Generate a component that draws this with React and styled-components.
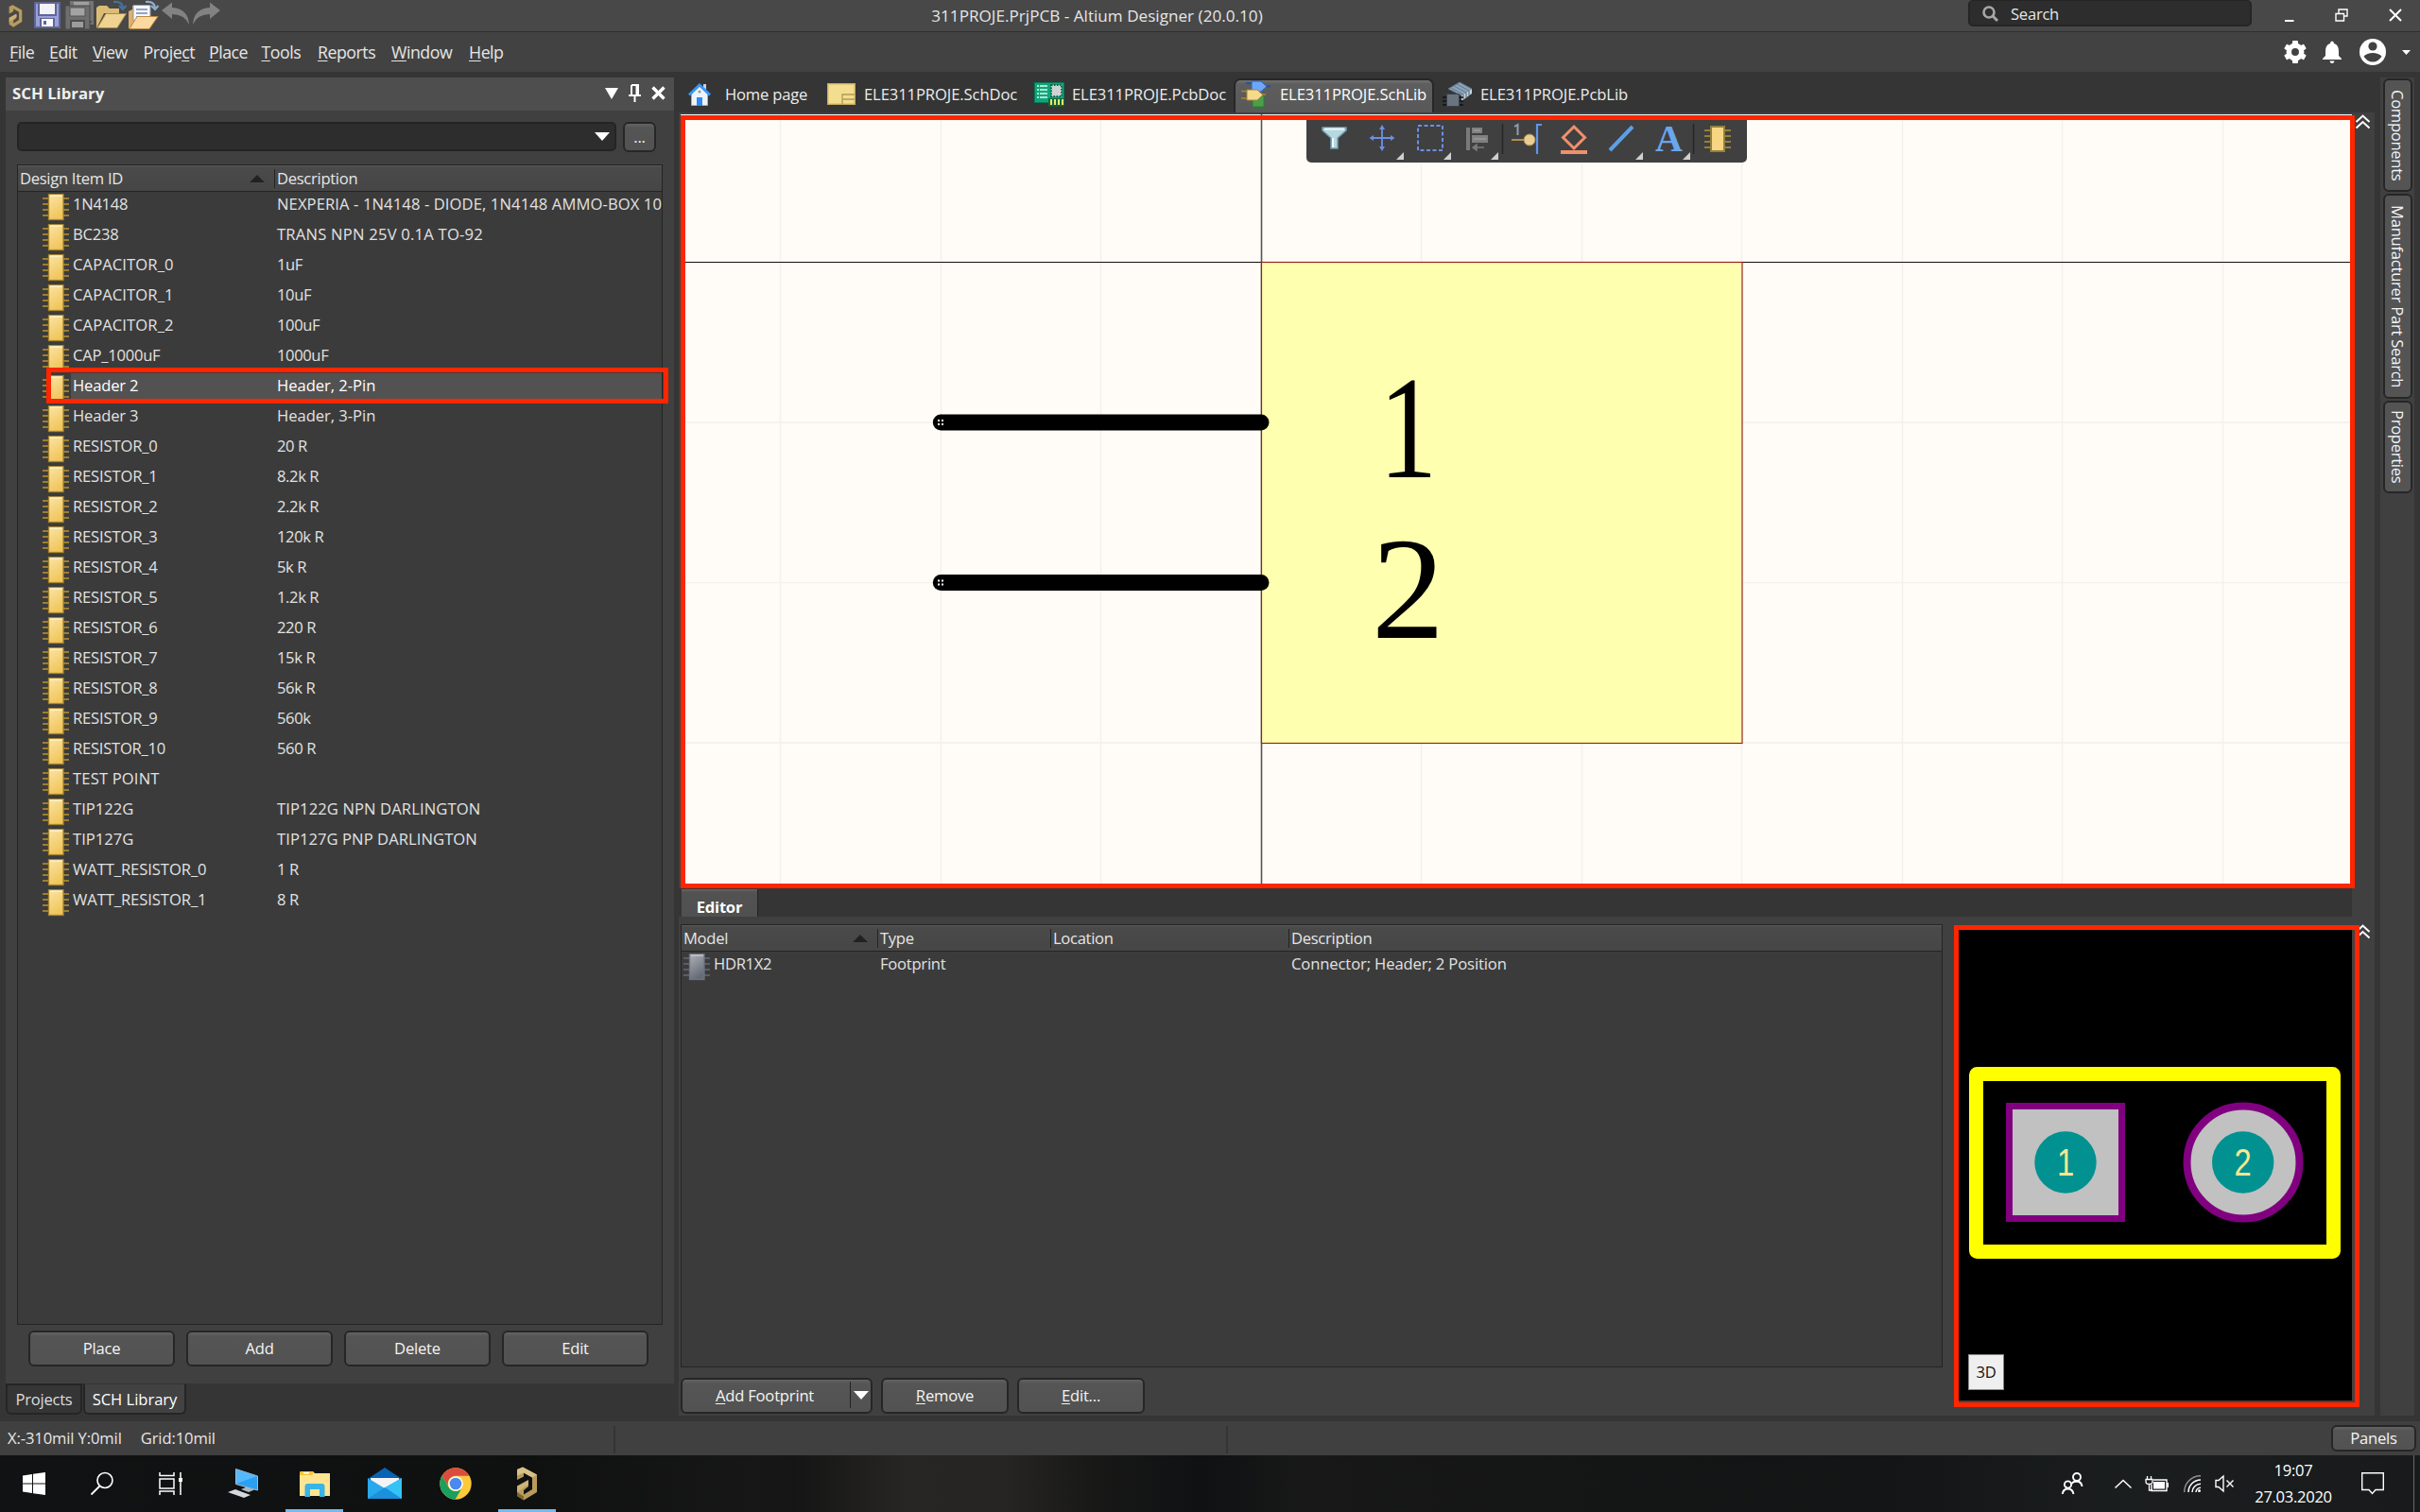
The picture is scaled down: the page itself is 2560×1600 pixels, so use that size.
import React from "react";
import styled, { createGlobalStyle, css } from "styled-components";

const Global = createGlobalStyle`
  * { box-sizing: border-box; }
  html, body { margin: 0; padding: 0; background: #353535; }
  body {
    width: 2560px; height: 1600px; overflow: hidden;
    font-family: "Open Sans", "Noto Sans", sans-serif;
    font-size: 16.6px; letter-spacing: -0.36px; color: #e6e6e6;
  }
  svg { display: block; flex: none; overflow: visible; }
  u { text-underline-offset: 2px; text-decoration-thickness: 1px; }
`;

const Screen = styled.div`
  width: 2560px; height: 1600px; display: flex; flex-direction: column; background: #353535;
`;

/* ---------- title and menu ---------- */
const TitleBar = styled.header`
  position: relative; height: 34px; display: flex; align-items: flex-start;
  background: #484848; border-bottom: 1px solid #2f2f2f; flex: none;
`;
const QuickTools = styled.div`display: flex; padding-left: 8px;`;
const Title = styled.div`
  position: absolute; left: 0; right: 239px; top: 4px; text-align: center; line-height: 26px; pointer-events: none;
  font-size: 17.1px; letter-spacing: 0.02px;
`;
const SearchBox = styled.div`
  margin-left: auto; width: 300px; height: 28px; display: flex; align-items: center; gap: 13px;
  padding: 1px 0 0 13px; background: #2d2d2d; border: 2px solid #252525; border-top-width: 1px; border-radius: 5px;
  letter-spacing: -0.25px;
`;
const WindowButtons = styled.div`
  width: 178px; height: 33px; display: flex; align-items: center; padding: 0 19px 2px 35px; justify-content: space-between;
`;
const MenuBar = styled.nav`
  height: 42px; flex: none; display: flex; align-items: center; background: #424242; padding-left: 10px;
`;
const MenuItem = styled.span`
  width: ${p => p.$w}px; font-size: 17.8px; letter-spacing: -0.5px; line-height: 40px; white-space: nowrap;
`;
const MenuRight = styled.div`
  margin-left: auto; display: flex; align-items: center; padding-right: 10px;
`;
const Spacer = styled.span`width: ${p => p.$w}px; flex: none;`;

/* ---------- workspace ---------- */
const Workspace = styled.main`height: 1428px; display: flex; flex: none;`;
const LeftColumn = styled.aside`width: 718px; padding: 6px 5px 0 6px; display: flex; flex-direction: column;`;
const Panel = styled.section`
  position: relative; height: 1382px; background: #404040; display: flex; flex-direction: column;
`;
const PanelHeader = styled.div`
  height: 35px; flex: none; background: #4e4e4e; display: flex; align-items: center; padding: 0 9px 2px 7px;
  font-weight: 700; font-size: 16.8px; letter-spacing: 0; color: #efefef;
`;
const PanelHeaderIcons = styled.div`margin-left: auto; display: flex; align-items: center; gap: 11px;`;
const FilterRow = styled.div`display: flex; gap: 7px; padding: 12px 19px 0 12px; height: 57px; flex: none;`;
const Combo = styled.div`
  flex: 1; height: 31px; background: #2d2d2d; border: 2px solid #242424; border-radius: 5px;
  display: flex; align-items: center; justify-content: flex-end; padding-right: 5px;
`;

const raised = css`
  background: linear-gradient(#646464, #555 4px, #525252); border: 2px solid #262626; border-radius: 6px; color: #f4f4f4;
`;
const Button = styled.button`
  ${raised}
  width: ${p => p.$w}px; height: ${p => p.$h || 38}px; padding: 0 0 2px; display: flex; align-items: center; justify-content: center;
  font: inherit; letter-spacing: -0.2px; flex: none;
`;
const SplitLabel = styled.span`flex: 1; text-align: center; padding-right: 3px;`;
const SplitArrow = styled.span`
  width: 22px; height: 28px; border-left: 1px solid #222; display: flex; align-items: center; justify-content: center;
`;

const Grid = styled.div`
  border: 1px solid #242424; background: #3b3b3b; display: flex; flex-direction: column;
  width: ${p => p.$w}px; height: ${p => p.$h}px; flex: none;
`;
const LibraryGrid = styled(Grid)`margin-left: 12px;`;
const GridHead = styled.div`
  height: 28px; flex: none; display: flex; align-items: center; background: linear-gradient(#5a5a5a, #4a4a4a 2px, #464646);
  border-bottom: 1px solid #242424;
`;
const HeadCell = styled.div`
  width: ${p => p.$w}px; flex: ${p => (p.$w ? "none" : 1)}; height: 20px; display: flex; align-items: center; justify-content: space-between;
  padding: 0 ${p => p.$pr || 0}px 0 2px; border-right: 1px solid ${p => (p.$w ? "#242424" : "transparent")};
  letter-spacing: -0.3px; white-space: nowrap;
`;
const Row = styled.div`
  height: ${p => p.$h || 32}px; flex: none; display: flex; align-items: flex-start; padding-left: ${p => p.$pl || 0}px;
`;
const RowIcon = styled.span`padding-top: ${p => p.$pt || 2}px; width: 30px; flex: none;`;
const RowFill = styled.div`
  flex: 1; min-width: 0; height: 28px; display: flex; background: ${p => (p.$on ? "#525252" : "transparent")};
  color: ${p => (p.$on ? "#fff" : "#e2e2e2")};
`;
const Cell = styled.span`
  width: ${p => p.$w}px; flex: ${p => (p.$w ? "none" : 1)}; padding-left: 2px; line-height: 25px; white-space: nowrap; overflow: hidden;
  letter-spacing: ${p => p.$track ?? -0.4}px;
`;
const RowMark = styled.div`
  position: absolute; left: 43px; top: 307px; width: 658px; height: 38px; border: 5px solid #ff2600;
`;
const ButtonRow = styled.div`display: flex; gap: 12px; padding: 6px 0 0 24px;`;
const PanelTabs = styled.div`display: flex; gap: 1px;`;
const PanelTab = styled.div`
  width: ${p => p.$w}px; height: 33px; display: flex; align-items: center; justify-content: center; letter-spacing: ${p => p.$track}px;
  border: 2px solid #252525; border-top: ${p => (p.$on ? "1px solid #353535" : "2px solid #252525")}; border-radius: 0 0 6px 6px;
  background: ${p => (p.$on ? "#424242" : "#353535")}; color: ${p => (p.$on ? "#fff" : "#dcdcdc")};
`;

/* ---------- documents ---------- */
const Center = styled.div`width: 1794px; display: flex; flex-direction: column; flex: none;`;
const DocTabs = styled.div`height: 43px; flex: none; display: flex; align-items: flex-end;`;
const DocTab = styled.div`
  width: ${p => p.$w}px; height: 36px; display: flex; align-items: center; padding: 0 0 3px ${p => p.$pl}px; gap: ${p => p.$gap}px;
  white-space: nowrap; letter-spacing: ${p => p.$track || -0.1}px; color: #ececec;
  ${p => p.$on && css`
    color: #fff; background: linear-gradient(#727272, #5e5e5e 4px, #585858); border: 2px solid #272727; border-bottom: 0;
    border-radius: 7px 7px 0 0; padding-bottom: 5px;
  `}
`;
const EditorArea = styled.div`
  height: 821px; flex: none; background: #404040; display: flex; padding: 2px 0 0 2px;
`;
const Sheet = styled.div`
  position: relative; width: 1768px; height: 819px; background: #fffcf7;
`;
const SheetFrame = styled.div`
  position: absolute; left: 0; top: 1px; width: 1771px; height: 818px; border: 5px solid #ff2600;
`;
const Floating = styled.div`
  position: absolute; left: 662px; top: 6px; width: 466px; height: 45px; background: #404040; border-radius: 0 0 5px 5px;
  display: flex; align-items: flex-start; padding: 4px 0 0 16px;
`;
const Tool = styled.span`width: ${p => p.$w || 50}px; height: 38px; flex: none;`;
const Gutter = styled.div`margin-left: ${p => p.$ml ?? 4}px;`;
const EditorTabs = styled.div`height: 30px; flex: none; display: flex; padding: 1px 0 0 3px; background: #353535; margin-right: 24px;`;
const EditorTab = styled.div`
  width: 81px; height: 29px; background: linear-gradient(#666, #525252 3px, #505050); border-right: 1px solid #252525;
  display: flex; align-items: center; justify-content: center; padding-top: 8px; font-weight: 700; letter-spacing: -0.25px; color: #fff;
`;
const EditorTabWrap = styled.div`background: #404040; flex: none;`;
const ModelPane = styled.div`
  height: 528px; background: #404040; display: flex; padding: 8px 0 0 2px;
`;
const ModelLeft = styled.div`width: 1347px; display: flex; flex-direction: column;`;
const ModelButtons = styled.div`display: flex; gap: 9px; padding-top: 11px;`;
const Preview = styled.div`
  position: relative; width: 429px; height: 510px; margin-top: 1px; border: 5px solid #ff2600; background: #000;
  box-shadow: inset -3px -2px 0 #454040;
`;
const ThreeD = styled.div`
  position: absolute; left: 10px; bottom: 13px; width: 38px; height: 38px; background: #efefef; border: 1px solid #888;
  color: #111; display: flex; align-items: center; justify-content: center; padding-bottom: 2px;
`;

/* ---------- right rail ---------- */
const Rail = styled.aside`
  margin: 6px 0 0 6px; width: 36px; height: 1416px; background: #404040; display: flex; flex-direction: column; gap: 2px; padding: 1px 0 0 3px;
`;
const RailTab = styled.div`
  ${raised}
  background: #545454; width: 31px; height: ${p => p.$h}px; writing-mode: vertical-rl; display: flex; align-items: center;
  justify-content: center; letter-spacing: ${p => p.$track}px;
`;

/* ---------- status and task bars ---------- */
const StatusBar = styled.footer`
  height: 36px; flex: none; background: #404040; display: flex; align-items: center; padding: 0 4px 0 8px;
`;
const StatusCell = styled.div`
  width: ${p => p.$w}px; height: 29px; line-height: 26px; border-right: 2px solid #343434; margin-top: 3px; display: flex; gap: 20px;
  letter-spacing: -0.12px;
`;
const StatusEnd = styled.div`margin-left: auto;`;
const TaskBar = styled.div`
  height: 60px; flex: none; display: flex; color: #fff;
  background: linear-gradient(90deg, #111213 0, #0f1010 560px, #161716 800px, #151515 840px, #272624 960px, #262523 1060px,
    #181817 1160px, #0f1113 1270px, #171817 1370px, #141515 1700px, #131516 2000px, #1b1e1f 2250px, #181a1b 2560px);
`;
const TaskItem = styled.div`
  width: ${p => p.$w}px; height: 60px; display: flex; align-items: center; justify-content: center; flex: none;
  border-bottom: 3px solid ${p => (p.$open ? "#76b9ed" : "transparent")}; padding-top: 3px;
`;
const Tray = styled.div`margin-left: auto; display: flex; align-items: center; height: 60px;`;
const Clock = styled.div`
  width: 96px; text-align: center; line-height: 28px; letter-spacing: -0.3px; margin: 0 24px 0 15px;
`;
const ShowDesktop = styled.div`width: 7px; height: 60px; border-left: 1px solid #6a6a6a; margin-left: 31px;`;

/* ---------- small drawings ---------- */
const Down = ({ w = 16, h = 8, c = "#fff" }) => (
  <svg width={w} height={h}><path d={`M0 0H${w}L${w / 2} ${h}Z`} fill={c} /></svg>
);
const Up = () => <svg width="16" height="8"><path d="M0 8H16L8 0Z" fill="#222" /></svg>;

const Chip = ({ grey }) => (
  <svg width="28" height="28" viewBox="0 0 28 28">
    <defs>
      <linearGradient id={grey ? "cg" : "cy"} x1="0" y1="0" x2="0.4" y2="1">
        <stop offset="0" stopColor={grey ? "#aeb0b8" : "#fbe4a4"} />
        <stop offset="1" stopColor={grey ? "#666d78" : "#f1c65c"} />
      </linearGradient>
    </defs>
    {[5, 11, 17, 23].map(y => (
      <path key={y} d={`M0 ${y}H28`} stroke={grey ? "#5d626d" : "#a8862f"} strokeWidth="1.8" />
    ))}
    <rect x="6.5" y="0.7" width="15.5" height="26.8" fill={`url(#${grey ? "cg" : "cy"})`} stroke={grey ? "#6f7480" : "#a8862f"} strokeWidth="1.3" />
    <path d="M7.6 2H21" stroke={grey ? "#c9cad0" : "#fff4d2"} strokeWidth="1.4" />
  </svg>
);

const Altium = ({ w, h }) => (
  <svg width={w} height={h} viewBox="0 0 23 36">
    <path d="M1 3L7 0.5L22 8.5V27L8 35.5L1 31V25L13 16V21L8 25V29.5L17 24V11.5L8 6.5V10.500L1 14Z" fill="#b89b5c" />
    <path d="M1 3L7 0.5L22 8.5L17 11.5L8 6.5L1 9.5Z" fill="#d8c08a" />
    <path d="M1 20.5L13 14V19L1 27Z" fill="#cdb377" />
    <path d="M1 27L8 31.5V35.5L1 31Z" fill="#7d6632" />
  </svg>
);

const TitleIcons = () => (
  <svg width="226" height="33" viewBox="8 0 226 33">
    <g transform="translate(9 5) scale(0.65 0.67)">
      <path d="M1 3L7 0.5L22 8.5V27L8 35.5L1 31V25L13 16V21L8 25V29.5L17 24V11.5L8 6.5V10.500L1 14Z" fill="#b89b5c" />
      <path d="M1 20.5L13 14V19L1 27Z" fill="#cdb377" />
    </g>
    <rect x="36" y="2" width="28" height="28" fill="#5f6596" />
    <rect x="38" y="4" width="24" height="24" fill="#9aa0d8" />
    <rect x="40" y="3" width="20" height="14" fill="#5f6596" /><rect x="42" y="4" width="16" height="11" fill="#f2f2f8" />
    <rect x="42" y="19" width="16" height="10" fill="#5f6596" /><rect x="44" y="20" width="12" height="8" fill="#fbfbff" />
    <rect x="46" y="22" width="3" height="4" fill="#5f6596" />
    <rect x="74" y="1" width="25" height="25" fill="#747474" />
    <rect x="78" y="2" width="16" height="5" fill="#a0a0a0" />
    <path d="M92 8V23H97" stroke="#505050" strokeWidth="2" fill="none" />
    <rect x="69" y="6" width="26" height="25" fill="#6e6e6e" stroke="#4b4b4b" />
    <rect x="74" y="8" width="16" height="9" fill="#a3a3a3" stroke="#555" /><rect x="75" y="22" width="14" height="8" fill="#9c9c9c" stroke="#4d4d4d" strokeWidth="2" />
    <path d="M102 30V8L105 6H113L116 9H126V14H110Z" fill="#dcbc74" />
    <path d="M103 29.500L112 14.500H133.500L124 29.500Z" fill="#f0d391" stroke="#a98a47" />
    <path d="M120 2Q129 1 130 8M126 6L130 10L133.500 6" fill="none" stroke="#4a7096" strokeWidth="2.2" />
    <path d="M136 30V12L140 10V6H144V30Z" fill="#dcb068" />
    <path d="M141 5.500H159V22H141Z" fill="#f6f8fd" stroke="#8f93b0" />
    <path d="M144 10H156M144 14H156M144 18H154" stroke="#7388bb" strokeWidth="1.500" />
    <path d="M137 30.500L145 17.500H167L158 30.500Z" fill="#fbd9a0" stroke="#b98b3f" />
    <path d="M154 2Q163 1 164 8M160 6L164 10L167.500 6" fill="none" stroke="#8fb0cf" strokeWidth="2" />
    <path d="M171 11L182 2.500V8Q199 9 200 26Q195 15 182 15V20Z" fill="#828282" />
    <path d="M233 11L222 2.500V8Q205 9 204 26Q209 15 222 15V20Z" fill="#828282" />
  </svg>
);

const Pin = () => (
  <svg width="13" height="19"><path d="M3 1H10V11M3 1V11M0 12H13M6.500 12V19" stroke="#fff" strokeWidth="2" fill="none" /><path d="M7.500 1H10V11H7.500Z" fill="#fff" /></svg>
);
const Cross = () => <svg width="15" height="15"><path d="M1.500 1.500L13.500 13.500M13.500 1.500L1.500 13.500" stroke="#fff" strokeWidth="3.400" /></svg>;
const Chevrons = () => (
  <svg width="15" height="15"><path d="M0.500 8L7.500 1.500L14.500 8M0.500 14.500L7.500 8L14.500 14.500" stroke="#fff" strokeWidth="2" fill="none" /></svg>
);
const Corner = ({ x = 28 }) => <path d={`M${x + 8} 30V38H${x}Z`} fill="#d0d0d0" />;

/* ---------- schematic symbol ---------- */
const vLines = [105.500, 275.500, 444.500, 783.500, 953.500, 1122.500, 1292.500, 1461.500, 1631.500];
const hLines = [326, 495.500, 665];
const pins = [
  { y: 326, base: 384, label: "1", cx: 769.500, sx: 0.8 },
  { y: 495.500, base: 554, label: "2", cx: 769.500, sx: 1 },
];
const Schematic = () => (
  <svg width="1768" height="819">
    {vLines.map(x => <path key={x} d={`M${x} 0V819`} stroke="#f1f1ee" strokeWidth="1.4" />)}
    {hLines.map(y => <path key={y} d={`M0 ${y}H1768`} stroke="#f1f1ee" strokeWidth="1.4" />)}
    <path d="M0 156.500H1768" stroke="#111" strokeWidth="1.1" />
    <path d="M614.500 0V819" stroke="#55554f" strokeWidth="1.6" />
    <rect x="614.500" y="156.500" width="508.500" height="509" fill="#ffffb0" stroke="#98231d" strokeWidth="1.2" />
    {pins.map(({ y, base, label, cx, sx }) => (
      <g key={label}>
        <path d={`M275.300 ${y}H614`} stroke="#000" strokeWidth="17" strokeLinecap="round" />
        {[[272, -3], [276, -3], [272, 1], [276, 1]].map(([dx, dy]) => (
          <rect key={dx + "," + dy} x={dx} y={y + dy} width="2" height="2" fill="#fff" />
        ))}
        <text transform={`translate(${cx} ${base}) scale(${sx} 1)`} textAnchor="middle" fontSize="154" letterSpacing="0"
          fontFamily="'Liberation Serif', serif" fill="#000">{label}</text>
      </g>
    ))}
  </svg>
);

const Footprint = () => (
  <svg width="419" height="500" viewBox="2072 984 419 500">
    <rect x="2090.500" y="1136.500" width="378" height="188" rx="1" fill="none" stroke="#ffff00" strokeWidth="15" strokeLinejoin="round" />
    <rect x="2125.500" y="1170.500" width="119" height="119" fill="#c1c1c1" stroke="#800080" strokeWidth="7" />
    <circle cx="2373" cy="1230" r="59.500" fill="#c1c1c1" stroke="#800080" strokeWidth="8" />
    {[2185, 2372.700].map((x, i) => (
      <g key={x}>
        <circle cx={x} cy="1230" r="32.700" fill="#009190" />
        <text transform={`translate(${x} 1244) scale(0.82 1)`} textAnchor="middle" letterSpacing="0" fontSize="40"
          fontFamily="'Liberation Sans', sans-serif" fill="#ffe690">{i + 1}</text>
      </g>
    ))}
  </svg>
);

/* id, description, tracking of each */
const items = [
  ["1N4148", "NEXPERIA - 1N4148 - DIODE, 1N4148 AMMO-BOX 100", -0.3, 0.1], ["BC238", "TRANS NPN 25V 0.1A TO-92", -0.2, 0.22],
  ["CAPACITOR_0", "1uF", 0.1], ["CAPACITOR_1", "10uF", 0.1], ["CAPACITOR_2", "100uF", 0.1], ["CAP_1000uF", "1000uF", -0.25],
  ["Header 2", "Header, 2-Pin", -0.2, -0.04], ["Header 3", "Header, 3-Pin", -0.2, -0.04],
  ["RESISTOR_0", "20 R", -0.17], ["RESISTOR_1", "8.2k R", -0.17],
  ["RESISTOR_2", "2.2k R", -0.17], ["RESISTOR_3", "120k R", -0.17], ["RESISTOR_4", "5k R", -0.17], ["RESISTOR_5", "1.2k R", -0.17],
  ["RESISTOR_6", "220 R", -0.17], ["RESISTOR_7", "15k R", -0.17], ["RESISTOR_8", "56k R", -0.17], ["RESISTOR_9", "560k", -0.17],
  ["RESISTOR_10", "560 R", -0.25], ["TEST POINT", "", 0.15], ["TIP122G", "TIP122G NPN DARLINGTON", 0, 0.1],
  ["TIP127G", "TIP127G PNP DARLINGTON", 0, 0.06], ["WATT_RESISTOR_0", "1 R", -0.08], ["WATT_RESISTOR_1", "8 R", -0.08],
];

const menu = [
  ["", "F", "ile", 42], ["", "E", "dit", 46], ["", "V", "iew", 53.500], ["Proje", "c", "t", 69.500], ["", "P", "lace", 55.500],
  ["", "T", "ools", 59.500], ["", "R", "eports", 78], ["", "W", "indow", 82], ["", "H", "elp", 60],
];

const LibraryPanel = () => (
  <LeftColumn>
    <Panel>
      <PanelHeader>
        SCH Library
        <PanelHeaderIcons><Down w={14} h={12} /><Pin /><Cross /></PanelHeaderIcons>
      </PanelHeader>
      <FilterRow>
        <Combo><Down w={16} h={9} /></Combo>
        <Button $w={35} $h={32}>...</Button>
      </FilterRow>
      <LibraryGrid $w={683} $h={1228}>
        <GridHead>
          <HeadCell $w={272} $pr={10}>Design Item ID<Up /></HeadCell>
          <HeadCell>Description</HeadCell>
        </GridHead>
        {items.map(([id, text, idTrack, textTrack]) => (
          <Row key={id} $pl={26}>
            <RowIcon><Chip /></RowIcon>
            <RowFill $on={id === "Header 2"}>
              <Cell $w={216} $track={idTrack}>{id}</Cell>
              <Cell $track={textTrack}>{text}</Cell>
            </RowFill>
          </Row>
        ))}
      </LibraryGrid>
      <ButtonRow>
        {["Place", "Add", "Delete", "Edit"].map(t => <Button key={t} $w={155}>{t}</Button>)}
      </ButtonRow>
      <RowMark />
    </Panel>
    <PanelTabs>
      <PanelTab $w={81} $track={-0.25}>Projects</PanelTab>
      <PanelTab $w={109} $track={-0.05} $on>SCH Library</PanelTab>
    </PanelTabs>
  </LeftColumn>
);

const Documents = () => (
  <DocTabs>
    <DocTab $w={147} $pl={10} $gap={15} $track={-0.2}>
      <svg width="24" height="24">
        <rect x="16" y="1" width="3" height="7" fill="#c9d4e0" />
        <path d="M3.500 10L12 3L20.500 10V23.500H3.500Z" fill="#eef3fa" stroke="#9db1cc" />
        <path d="M1 12.500L12 2L23 12.500" fill="none" stroke="#3a94f5" strokeWidth="3" />
        <rect x="9" y="15" width="6" height="9" fill="#2f8bf0" /><circle cx="12" cy="9" r="1.600" fill="#8aa0ba" />
      </svg>
      Home page
    </DocTab>
    <DocTab $w={219} $pl={10} $gap={9}>
      <svg width="30" height="23">
        <rect x="0.700" y="0.700" width="28.600" height="21.600" fill="#f3dd8f" stroke="#c8ad62" strokeWidth="1.400" />
        <path d="M16 22V12H29M16 17H29" stroke="#b29a58" strokeWidth="1.300" fill="none" />
      </svg>
      ELE311PROJE.SchDoc
    </DocTab>
    <DocTab $w={221} $pl={10} $gap={8}>
      <svg width="32" height="26">
        <rect x="0.500" y="0.500" width="31" height="21" fill="#0da67c" stroke="#067a57" />
        <path d="M3 4H5M3 8H5M3 12H5M3 16H5M6 4H14M6 8H14M6 12H14M6 16H14" stroke="#d9ffe9" strokeWidth="1.500" />
        <rect x="18" y="3" width="11" height="12" fill="#c9cccc" stroke="#1c5e49" strokeDasharray="1.500 1.500" strokeWidth="2" />
        <rect x="19" y="4" width="9" height="10" fill="#cfd2d2" />
        <rect x="15" y="17" width="17" height="8.500" fill="#14663f" /><path d="M18 18V24M22 18V24M26 18V24M30 18V24" stroke="#e7ea6a" strokeWidth="2" />
      </svg>
      ELE311PROJE.PcbDoc
    </DocTab>
    <DocTab $w={212} $pl={6} $gap={9} $on>
      <svg width="32" height="30">
        <path d="M12 16H24V28H12Z" fill="#4aa04a" stroke="#2f7d33" />
        <path d="M13 28V30.500M16.500 28V30.500M20 28V30.500M23.500 28V30.500" stroke="#2f7d33" strokeWidth="1.400" />
        <path d="M5 3H12M26 6.500H31" stroke="#1b4e9e" strokeWidth="1.600" />
        <path d="M11 1H21L27 6.500L21 12H11Z" fill="#6da6fa" stroke="#2d62b5" />
        <path d="M0 11.500H8M0 19H8M22 15H26" stroke="#a88632" strokeWidth="1.500" />
        <path d="M6 10H17L23 15.500L17 21H6Z" fill="#f5da8c" stroke="#a88632" />
      </svg>
      ELE311PROJE.SchLib
    </DocTab>
    <DocTab $w={220} $pl={9} $gap={8}>
      <svg width="32" height="28">
        <path d="M6 8L18 1L31 8L20 15Z" fill="#8ca4b8" stroke="#5c7286" /><path d="M9 7L22 14M12 5L25 12M15 3L28 10" stroke="#5f7890" />
        <path d="M20 15L31 8V13L20 21Z" fill="#c4d2de" /><path d="M22 14V19M25 12V17M28 10V15" stroke="#4d5f70" />
        <path d="M0 17H22M0 21H22M0 25H22" stroke="#111" strokeWidth="1.500" />
        <rect x="4.500" y="13.500" width="13" height="13" fill="#69747f" stroke="#3a424a" />
      </svg>
      ELE311PROJE.PcbLib
    </DocTab>
  </DocTabs>
);

const ActiveBar = () => (
  <Floating>
    <Tool $w={51}><svg width="38" height="38"><path d="M1 4H26V7L17 15V26H10V15L1 7Z" fill="#b7d8df" stroke="#6f9fb5" strokeWidth="1.500" /><path d="M3 5.500H24" stroke="#eefafa" strokeWidth="2" /><path d="M12 15V25" stroke="#f2fbfb" strokeWidth="2" /></svg></Tool>
    <Tool $w={51}>
      <svg width="38" height="38"><path d="M13 4V26M2 15H24" stroke="#6c8fe6" strokeWidth="1.800" /><path d="M13 1L16 6H10ZM13 29L10 24H16ZM-0.500 15L4 12V18ZM26.500 15L22 18V12Z" fill="#6c8fe6" /><Corner /></svg>
    </Tool>
    <Tool><svg width="38" height="38"><rect x="0" y="2" width="26" height="26" fill="none" stroke="#6c8fe6" strokeWidth="2" strokeDasharray="4 2.500" /><Corner x={27} /></svg></Tool>
    <Tool $w={40}>
      <svg width="38" height="38"><rect x="1" y="4" width="4" height="24" fill="#7a7a7a" /><path d="M7 4H18V10H7ZM7 12H24V20H7Z" fill="#808080" /><path d="M9 7H16M9 16H22" stroke="#9a9a9a" strokeWidth="1.500" /><path d="M8 25H20M8 25L12 22V28Z" stroke="#7a7a7a" strokeWidth="1.500" fill="#7a7a7a" /><Corner x={27} /></svg>
    </Tool>
    <Tool $w={59}>
      <svg width="38" height="38"><path d="M-0.500 0V32" stroke="#262626" strokeWidth="1.500" /><path d="M12 3L15.500 1V12" stroke="#8fa0ad" strokeWidth="2" fill="none" /><path d="M9 17H22" stroke="#b08d4f" strokeWidth="2" /><circle cx="28" cy="17" r="6" fill="#e9cd92" stroke="#b08d4f" /><path d="M41 1H36V32" stroke="#5f96ea" strokeWidth="2.200" fill="none" /></svg>
    </Tool>
    <Tool>
      <svg width="38" height="38"><path d="M16 3L27.500 14.500L16 26L4.500 14.500Z" fill="none" stroke="#f0906c" strokeWidth="3" /><path d="M2 30H30" stroke="#f0906c" strokeWidth="4" /></svg>
    </Tool>
    <Tool><svg width="38" height="38"><path d="M4 28L28 3" stroke="#5c9fe8" strokeWidth="4" /><Corner x={31} /></svg></Tool>
    <Tool $w={46}>
      <svg width="38" height="38"><text x="2" y="29" fontFamily="'Liberation Serif', serif" fontWeight="700" fontSize="40" letterSpacing="0" fill="#6aa6ee">A</text><Corner x={31} /></svg>
    </Tool>
    <Tool><svg width="38" height="38"><path d="M-3.500 0V32" stroke="#262626" strokeWidth="1.500" /><path d="M8 7H36M8 13H36M8 19H36M8 25H36" stroke="#94803c" strokeWidth="2" /><rect x="15" y="3" width="14" height="26" fill="#f7d583" stroke="#94803c" strokeWidth="2" /></svg></Tool>
  </Floating>
);

export default function App() {
  return (
    <Screen>
      <Global />
      <TitleBar>
        <QuickTools><TitleIcons /></QuickTools>
        <Title>311PROJE.PrjPCB - Altium Designer (20.0.10)</Title>
        <SearchBox>
          <svg width="17" height="17"><circle cx="7" cy="7" r="5.500" fill="none" stroke="#a6a6a6" strokeWidth="2.600" /><path d="M11 11L16 16" stroke="#a6a6a6" strokeWidth="3" /></svg>
          Search
        </SearchBox>
        <WindowButtons>
          <svg width="10" height="14"><path d="M0 13H9.500" stroke="#fff" strokeWidth="2" /></svg>
          <svg width="14" height="14"><path d="M4 5V1H13V8H9.500M1 5.500H9.500V13H1Z" fill="none" stroke="#fff" strokeWidth="1.400" /></svg>
          <svg width="14" height="14"><path d="M1 1L13 13M13 1L1 13" stroke="#fff" strokeWidth="2" /></svg>
        </WindowButtons>
      </TitleBar>
      <MenuBar>
        {menu.map(([a, k, b, w]) => <MenuItem key={k + b} $w={w}>{a}<u>{k}</u>{b}</MenuItem>)}
        <MenuRight>
          <svg width="24" height="24" viewBox="0 0 24 24">
            <circle cx="12" cy="12" r="6.700" fill="none" stroke="#fff" strokeWidth="5.500" />
            {[0, 60, 120, 180, 240, 300].map(a => <rect key={a} x="9" y="0" width="6" height="5" rx="1" fill="#fff" transform={`rotate(${a} 12 12)`} />)}
          </svg>
          <Spacer $w={17} />
          <svg width="20" height="24"><path d="M10 0.500Q12 0.500 12 3Q17 4.500 17 11V16L20 19V20H0V19L3 16V11Q3 4.500 8 3Q8 0.500 10 0.500ZM7.500 21.500H12.500Q12 24 10 24Q8 24 7.500 21.500Z" fill="#fff" /></svg>
          <Spacer $w={19} />
          <svg width="28" height="28"><circle cx="14" cy="14" r="14" fill="#fff" /><circle cx="14" cy="8" r="4.600" fill="#424242" /><path d="M4.500 18.500Q8 15 14 15Q20 15 23.500 18.500Q20 24.500 14 24.500Q8 24.500 4.500 18.500Z" fill="#424242" /></svg>
          <Spacer $w={17} />
          <Down w={9} h={5} />
        </MenuRight>
      </MenuBar>

      <Workspace>
        <LibraryPanel />
        <Center>
          <Documents />
          <EditorArea>
            <Sheet>
              <Schematic />
              <ActiveBar />
              <SheetFrame />
            </Sheet>
            <Gutter><Chevrons /></Gutter>
          </EditorArea>
          <EditorTabWrap><EditorTabs><EditorTab>Editor</EditorTab></EditorTabs></EditorTabWrap>
          <ModelPane>
            <ModelLeft>
              <Grid $w={1335} $h={469}>
                <GridHead>
                  <HeadCell $w={208} $pr={10}>Model<Up /></HeadCell>
                  <HeadCell $w={183}>Type</HeadCell>
                  <HeadCell $w={252}>Location</HeadCell>
                  <HeadCell>Description</HeadCell>
                </GridHead>
                <Row $pl={2}>
                  <RowIcon><Chip grey /></RowIcon>
                  <RowFill>
                    <Cell $w={176} $track={-0.3}>HDR1X2</Cell>
                    <Cell $w={183} $track={-0.25}>Footprint</Cell>
                    <Cell $w={252} />
                    <Cell $track={-0.12}>Connector; Header; 2 Position</Cell>
                  </RowFill>
                </Row>
              </Grid>
              <ModelButtons>
                <Button $w={203}><SplitLabel><u>A</u>dd Footprint</SplitLabel><SplitArrow><Down w={16} h={9} /></SplitArrow></Button>
                <Button $w={135}><span><u>R</u>emove</span></Button>
                <Button $w={135}><span><u>E</u>dit...</span></Button>
              </ModelButtons>
            </ModelLeft>
            <Preview>
              <Footprint />
              <ThreeD>3D</ThreeD>
            </Preview>
            <Gutter $ml={-4}><Chevrons /></Gutter>
          </ModelPane>
        </Center>
        <Rail>
          <RailTab $h={120} $track={-0.3}>Components</RailTab>
          <RailTab $h={217} $track={-0.25}>Manufacturer Part Search</RailTab>
          <RailTab $h={98} $track={-0.3}>Properties</RailTab>
        </Rail>
      </Workspace>

      <StatusBar>
        <StatusCell $w={643}><span>X:-310mil Y:0mil</span><span>Grid:10mil</span></StatusCell>
        <StatusCell $w={648} />
        <StatusEnd><Button $w={90} $h={28}>Panels</Button></StatusEnd>
      </StatusBar>

      <TaskBar>
        <TaskItem $w={72}>
          <svg width="24" height="24"><path d="M0 3.500L10 2V11.500H0ZM11 1.800L24 0V11.500H11ZM0 12.500H10V22L0 20.500ZM11 12.500H24V24L11 22.200Z" fill="#fff" /></svg>
        </TaskItem>
        <TaskItem $w={72}>
          <svg width="24" height="24"><circle cx="15" cy="8.500" r="8" fill="none" stroke="#fff" strokeWidth="1.600" /><path d="M9.500 14.500L0.500 23.500" stroke="#fff" strokeWidth="1.800" /></svg>
        </TaskItem>
        <TaskItem $w={72}>
          <svg width="25" height="24"><path d="M1 0V3.500H16V0M1 24V20H16V24M1 7H16V17H1ZM23 0V24" fill="none" stroke="#fff" strokeWidth="1.500" /><rect x="21" y="6" width="4" height="4" fill="#fff" /></svg>
        </TaskItem>
        <TaskItem $w={82}>
          <svg width="32" height="32"><path d="M8.500 0.500L31.500 8V23L8.500 16.500Z" fill="#2ba0f3" stroke="#aebac2" /><path d="M9 1L31 8L9 16Z" fill="#55b8fb" /><path d="M14 22L20 19.500L28 22.500L22 25Z" fill="#a9b9c1" /><path d="M0 25L8 22L24 28L17 31Z" fill="#d4dade" /></svg>
        </TaskItem>
        <Spacer $w={4} />
        <TaskItem $w={61} $open>
          <svg width="32" height="27"><path d="M0 2Q0 0 2 0H14L16 2H32V26H0Z" fill="#ffe591" /><path d="M0 2Q0 0 2 0H14Q15 3 12 4H0Z" fill="#f6c433" /><path d="M4 1.800H10" stroke="#fff" strokeWidth="1.500" /><path d="M5.500 27V16Q5.500 13 8.500 13H23.500Q26.500 13 26.500 16V27H21V19H11V27Z" fill="#3ab3e6" /></svg>
        </TaskItem>
        <Spacer $w={26} />
        <TaskItem $w={36}>
          <svg width="36" height="34"><path d="M0 12L18 0L36 12Z" fill="#0862b5" /><path d="M3 11H33V24H3Z" fill="#f4f4f6" /><path d="M0 11L18 22L36 11V33H0Z" fill="#2aa8ec" /><path d="M36 11V33L18 21Z" fill="#35c3f5" /><path d="M0 33L18 21L36 33Z" fill="#1b90dd" /></svg>
        </TaskItem>
        <Spacer $w={40} />
        <TaskItem $w={34}>
          <svg width="34" height="34" viewBox="0 0 34 34"><circle cx="17" cy="17" r="16.700" fill="#fdc93a" /><path d="M2.600 8.600A16.700 16.700 0 0 1 31.500 8.700H17A8.300 8.300 0 0 0 9.500 20.500Z" fill="#dc4b3f" /><path d="M2.600 8.600A16.700 16.700 0 0 0 16.500 33.700L24 21A8.300 8.300 0 0 1 9.800 21.200Z" fill="#18a05e" /><circle cx="17" cy="17" r="7.800" fill="#fff" /><circle cx="17" cy="17" r="6.300" fill="#4b88f0" /></svg>
        </TaskItem>
        <Spacer $w={28} />
        <TaskItem $w={61} $open><Altium w={23} h={36} /></TaskItem>
        <Tray>
          <svg width="22" height="24"><g fill="none" stroke="#fff" strokeWidth="1.900"><circle cx="16" cy="5" r="4" /><circle cx="6.500" cy="13" r="3.600" /><path d="M10.500 12Q12 9.500 16 9.500Q21 10 21.500 15M0.800 23Q1.500 17.500 6.500 17.500Q11.500 17.500 12.500 23" /></g></svg>
          <Spacer $w={34} />
          <svg width="18" height="10"><path d="M0.500 9.500L9 1.500L17.500 9.500" fill="none" stroke="#fff" strokeWidth="1.500" /></svg>
          <Spacer $w={15} />
          <svg width="24" height="17"><path d="M8 4H22V15.500H6V9" fill="none" stroke="#fff" strokeWidth="1.400" /><path d="M8 6H20V13.500H8Z" fill="#fff" /><path d="M22.500 7H24V12H22.500Z" fill="#fff" /><path d="M1.500 0V3M5.500 0V3M0 3.500H7V6Q7 8.500 3.500 8.500Q0 8.500 0 6ZM3.500 8V15H7" fill="none" stroke="#fff" strokeWidth="1.300" /></svg>
          <Spacer $w={16} />
          <svg width="18" height="18" fill="none" strokeWidth="1.500"><path d="M0.700 18A17 17 0 0 1 18 0.800" stroke="#8f9090" /><path d="M5 18A13 13 0 0 1 18 5" stroke="#fff" /><path d="M9 18A9 9 0 0 1 18 9.300" stroke="#fff" /><path d="M13 18A5 5 0 0 1 18 13.300" stroke="#fff" /><circle cx="16.500" cy="16.500" r="1.500" fill="#fff" /></svg>
          <Spacer $w={15} />
          <svg width="20" height="18"><path d="M1 5.500H4L9 1V17L4 12.500H1ZM12.500 5.500L19.500 12.500M19.500 5.500L12.500 12.500" fill="none" stroke="#fff" strokeWidth="1.400" /></svg>
          <Clock>19:07<br />27.03.2020</Clock>
          <svg width="24" height="24"><path d="M0.700 0.700H23.300V18.500H15L11.500 22.500L8 18.500H0.700Z" fill="none" stroke="#fff" strokeWidth="1.400" /></svg>
          <ShowDesktop />
        </Tray>
      </TaskBar>
    </Screen>
  );
}
